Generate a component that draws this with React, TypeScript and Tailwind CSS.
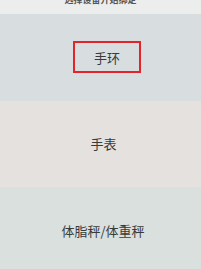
export default function App() {
  const font = { fontFamily: '"Noto Sans CJK SC", "Noto Sans", sans-serif' };
  return (
    <div className="flex h-[269px] w-[201px] flex-col overflow-hidden" style={font}>
      <div className="flex h-[14px] shrink-0 justify-center overflow-hidden bg-[#eceeee]">
        <span className="mt-[-6px] text-[9px] font-bold leading-[12px] text-[#555]">选择设备开始绑定</span>
      </div>
      <div className="flex h-[87px] shrink-0 items-center justify-center bg-[#d8dde0] pb-[2px] pl-[13px]">
        <div className="flex h-[32px] w-[68px] items-center justify-center border-2 border-[#e5232b] pt-[2px] text-[13px] text-[#3a3a3a]">
          手环
        </div>
      </div>
      <div className="flex h-[86px] shrink-0 items-center justify-center bg-[#e4e1de] pl-[6px] text-[13px] text-[#3a3a3a]">
        手表
      </div>
      <div className="flex flex-1 items-center justify-center bg-[#d9e0de] pl-[5px] pt-[6px] text-[13px] text-[#3a3a3a]">
        体脂秤/体重秤
      </div>
    </div>
  );
}
